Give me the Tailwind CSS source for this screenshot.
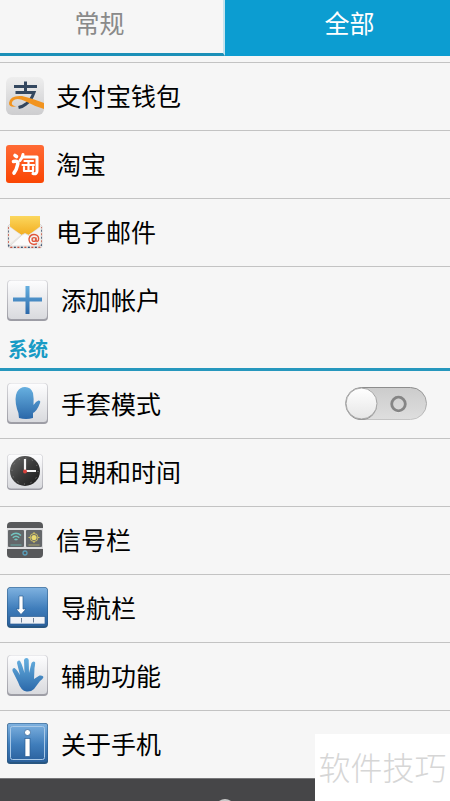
<!DOCTYPE html>
<html lang="zh-CN">
<head>
<meta charset="utf-8">
<meta name="viewport" content="width=device-width, initial-scale=1">
<title>设置</title>
<script src="https://cdn.jsdelivr.net/npm/@tailwindcss/browser@4"></script>
</head>
<body class="min-h-screen flex flex-col overflow-x-hidden bg-[#f6f6f6] text-black font-['Noto_Sans_CJK_SC',sans-serif]">

<svg class="absolute size-0" aria-hidden="true">
  <defs>
    <linearGradient id="tile" x1="0" y1="0" x2="0" y2="1"><stop offset="0" stop-color="#fdfdfe"/><stop offset="1" stop-color="#d9dade"/></linearGradient>
    <linearGradient id="silver" x1="0" y1="0" x2="0" y2="1"><stop offset="0" stop-color="#eeeeee"/><stop offset="1" stop-color="#cdcdcf"/></linearGradient>
    <linearGradient id="edge" x1="0" y1="0" x2="0" y2="1"><stop offset="0" stop-color="#d8d8dc"/><stop offset="1" stop-color="#9c9ca4"/></linearGradient>
    <linearGradient id="blueTile" x1="0" y1="0" x2="0" y2="1"><stop offset="0" stop-color="#7fb2e0"/><stop offset="0.55" stop-color="#3f7dbb"/><stop offset="1" stop-color="#2a609c"/></linearGradient>
    <linearGradient id="blueMark" x1="0" y1="0" x2="0" y2="1"><stop offset="0" stop-color="#67b0e0"/><stop offset="1" stop-color="#2b68a9"/></linearGradient>
    <linearGradient id="orange" x1="0" y1="0" x2="0" y2="1"><stop offset="0" stop-color="#ff6a35"/><stop offset="1" stop-color="#fa4603"/></linearGradient>
    <linearGradient id="yellow" x1="0" y1="0" x2="0" y2="1"><stop offset="0" stop-color="#fbd75e"/><stop offset="1" stop-color="#f3ae21"/></linearGradient>
    <linearGradient id="dial" x1="0" y1="0" x2="1" y2="1"><stop offset="0" stop-color="#6a6a6a"/><stop offset="0.5" stop-color="#3b3b3b"/><stop offset="1" stop-color="#191919"/></linearGradient>
    <linearGradient id="track" x1="0" y1="0" x2="0" y2="1"><stop offset="0" stop-color="#cccccc"/><stop offset="1" stop-color="#dedede"/></linearGradient>
    <linearGradient id="trackEdge" x1="0" y1="0" x2="0" y2="1"><stop offset="0" stop-color="#8d8d8d"/><stop offset="1" stop-color="#c4c4c4"/></linearGradient>
    <linearGradient id="knob" x1="0" y1="0" x2="0" y2="1"><stop offset="0" stop-color="#ffffff"/><stop offset="1" stop-color="#e6e6e6"/></linearGradient>
  </defs>
</svg>

<nav class="flex h-14 shrink-0 text-[25px] leading-11 text-center">
  <a href="#general" class="w-1/2 pr-6 border-r-2 border-[#c4e4ef] border-b-3 border-b-[#1b90b8] text-[#8a8a8a]">常规</a>
  <a href="#all" aria-current="page" class="w-1/2 pl-6 bg-[#0c9dd1] text-white">全部</a>
</nav>

<main class="pt-1.5">
  <ul class="border-t border-[#c3c3c3] text-[25px] leading-9">
    <li class="border-b border-[#c3c3c3]">
      <a href="#alipay" class="flex items-center h-[67px] gap-3 pl-1.5 pb-0.5">
        <svg class="size-[38px]" viewBox="0 0 38 38" aria-hidden="true">
          <rect width="38" height="38" rx="6" fill="url(#silver)"/>
          <path d="M8 9.500H31M19.500 4.500V15.500M9.500 15.500H28Q25 24 20 27Q17 29.500 12.500 30.500" fill="none" stroke="#33475f" stroke-width="3"/>
          <path d="M12 29Q3 31.500 3 26Q4 18 16 19Q25 21 38 26V32Q29 29.500 21 25Q13 21 9 22.500Q5 24.500 6 27.500Q8 30 12 29Z" fill="#f2941f"/>
        </svg>
        <span class="pb-0.5">支付宝钱包</span>
      </a>
    </li>
    <li class="border-b border-[#c3c3c3]">
      <a href="#taobao" class="flex items-center h-[67px] gap-3 pl-1.5 pb-0.5">
        <svg class="size-[38px]" viewBox="0 0 38 38" aria-hidden="true">
          <rect width="38" height="38" rx="3" fill="url(#orange)"/>
          <g fill="none" stroke="#fff" stroke-linecap="round" stroke-linejoin="round">
            <path d="M9 10.500L10.500 11.500M7.500 16.500Q13 15.500 11.500 20Q10.500 25 8 28" stroke-width="3.600"/>
            <path d="M17 9.500Q16.500 13 14 15.500M16.500 12H31V26Q31 29.500 27 28.500" stroke-width="3"/>
            <path d="M18.500 16H27M16.500 20H28M22.500 16V25M18 22V26H27V22" stroke-width="2.200"/>
          </g>
        </svg>
        <span class="pb-0.5">淘宝</span>
      </a>
    </li>
    <li class="border-b border-[#c3c3c3]">
      <a href="#email" class="flex items-center h-[67px] gap-3 pl-1.5 pb-0.5">
        <svg class="size-[38px]" viewBox="0 0 38 38" aria-hidden="true">
          <path d="M2 13L4 11H34L36 13V33Q36 35 34 35H4Q2 35 2 33Z" fill="#efedeb" stroke="#d0cdca" stroke-width="0.700"/>
          <path d="M2.700 14V32Q2.700 34.300 5 34.300H33Q35.300 34.300 35.300 32V14" fill="none" stroke="#c8513f" stroke-width="1.400" stroke-dasharray="2 5"/>
          <path d="M2.700 14V32Q2.700 34.300 5 34.300H33Q35.300 34.300 35.300 32V14" fill="none" stroke="#39506f" stroke-width="1.400" stroke-dasharray="2 5" stroke-dashoffset="-3.500"/>
          <path d="M4 3H34V15L22 22Q19 19 16 22L4 15Z" fill="url(#yellow)"/>
          <path d="M3 13V32L15 22ZM35 13V32L23 22Z" fill="#f5f3f1" stroke="#dcd9d5" stroke-width="0.500"/>
          <path d="M4 33L16 22Q19 19 22 22L34 33Z" fill="#fcfbfa" stroke="#d5d2ce" stroke-width="0.700"/>
          <circle cx="28" cy="26.500" r="1.900" fill="none" stroke="#e0573c" stroke-width="1.400"/>
          <path d="M30 24.500V27.500Q31 29 32.400 27.500Q33.500 23 29.500 21.700Q24 20.800 23 26Q23 31 28 31.500L31 30.800" fill="none" stroke="#e0573c" stroke-width="1.400"/>
        </svg>
        <span class="pb-0.5">电子邮件</span>
      </a>
    </li>
    <li>
      <a href="#add-account" class="flex items-center h-17 gap-3 pl-1.5 pb-0.5">
        <svg class="size-[43px]" viewBox="0 0 43 43" aria-hidden="true">
          <rect x="1" y="1" width="41" height="41" rx="4" fill="url(#edge)"/><rect x="2" y="1.500" width="39" height="38.500" rx="3.500" fill="url(#tile)"/>
          <path d="M19.500 7H23.500V18.500H36V22.500H23.500V35H19.500V22.500H7V18.500H19.500Z" fill="url(#blueMark)"/>
        </svg>
        <span class="pb-0.5">添加帐户</span>
      </a>
    </li>
  </ul>

  <h2 class="h-9 px-2 border-b-3 border-[#2697bd] text-[20px] leading-7 font-bold text-[#189bc5]">系统</h2>

  <ul class="text-[25px] leading-9">
    <li class="flex items-center h-17 gap-3 pl-1.5 pb-0.5 pr-[23px] border-b border-[#c3c3c3]">
      <svg class="size-[43px]" viewBox="0 0 43 43" aria-hidden="true">
        <rect x="1" y="1" width="41" height="41" rx="4" fill="url(#edge)"/><rect x="2" y="1.500" width="39" height="38.500" rx="3.500" fill="url(#tile)"/>
        <path d="M13 36Q13 31 11 27Q8 16 11 10Q14 5 19 5Q25 5 27 11Q28 17 27.500 23Q30 19 32.500 18.500Q35 18.500 34 21Q31 29 27 31V36Q20 38 13 36Z" fill="url(#blueMark)"/>
      </svg>
      <label for="glove" class="flex-1 pb-0.5">手套模式</label>
      <span class="relative flex w-[82px] h-[34px]">
        <svg class="w-full h-full" viewBox="0 0 82 34" aria-hidden="true">
          <rect x="0.500" y="0.500" width="81" height="32" rx="16" fill="url(#track)" stroke="url(#trackEdge)"/>
          <circle cx="53.500" cy="18" r="7" fill="none" stroke="#fff"/>
          <circle cx="53.500" cy="17" r="6.800" fill="none" stroke="#858585" stroke-width="2.800"/>
          <circle cx="16.500" cy="17.500" r="15.500" fill="#8f8f8f"/>
          <circle cx="16.500" cy="16.500" r="15.500" fill="url(#knob)" stroke="#a5a5a5"/>
        </svg>
        <input id="glove" type="checkbox" role="switch" class="absolute inset-0 w-full h-full opacity-0">
      </span>
    </li>
    <li class="border-b border-[#c3c3c3]">
      <a href="#datetime" class="flex items-center h-[67px] gap-3 pl-1.5 pb-0.5">
        <svg class="size-[38px]" viewBox="0 0 38 38" aria-hidden="true">
          <rect x="1" y="1" width="36" height="36" rx="4" fill="url(#edge)"/><rect x="1.700" y="1.500" width="34.600" height="34" rx="3.500" fill="url(#tile)"/>
          <circle cx="19" cy="18" r="15" fill="url(#dial)"/>
          <circle cx="19" cy="18" r="13" fill="none" stroke="#8a8a8a" stroke-width="1" stroke-dasharray="1 5.800"/>
          <path d="M19 6V18H30" fill="none" stroke="#f5f5f5" stroke-width="2.200"/>
          <circle cx="19" cy="18.500" r="2" fill="#d8413c"/>
        </svg>
        <span class="pb-0.5">日期和时间</span>
      </a>
    </li>
    <li class="border-b border-[#c3c3c3]">
      <a href="#signal-bar" class="flex items-center h-[67px] gap-3 pl-1.5 pb-0.5">
        <svg class="size-[38px]" viewBox="0 0 38 38" aria-hidden="true">
          <rect x="1" y="1" width="36" height="36" rx="4" fill="#58595b"/>
          <rect x="1" y="7" width="36" height="21" fill="#dcdcde"/>
          <rect x="2" y="9" width="16" height="17" rx="1" fill="#64676a"/><rect x="20" y="9" width="16" height="17" rx="1" fill="#64676a"/>
          <g fill="none" stroke="#73c5c0" stroke-width="1.500"><path d="M5 14.500Q10 10 15 14.500M6.800 16.800Q10 13.800 13.200 16.800M8.600 19Q10 17.500 11.400 19"/></g>
          <path d="M4.500 24H15.500" stroke="#66aaa5"/><path d="M22.500 24H33.500" stroke="#a7a36f"/>
          <circle cx="28" cy="16.500" r="2.600" fill="#e8d970"/>
          <circle cx="28" cy="16.500" r="4" fill="none" stroke="#c9bc66" stroke-width="1"/>
          <path d="M28 11V13M28 20V22M22.500 16.500H24.500M31.500 16.500H33.500" stroke="#d2c465"/>
          <circle cx="19" cy="32" r="2" fill="none" stroke="#5a9fba" stroke-width="1.300"/>
        </svg>
        <span class="pb-0.5">信号栏</span>
      </a>
    </li>
    <li class="border-b border-[#c3c3c3]">
      <a href="#nav-bar" class="flex items-center h-[67px] gap-3 pl-1.5 pb-0.5">
        <svg class="size-[43px]" viewBox="0 0 43 43" aria-hidden="true">
          <rect x="1" y="1" width="41" height="41" rx="4" fill="#285681"/><rect x="1.500" y="1.500" width="40" height="38.500" rx="3.500" fill="url(#blueTile)"/>
          <path d="M13 10H17V23H20L15 28.500L10 23H13Z" fill="#fff" stroke="#2d5f94" stroke-width="0.700"/>
          <rect x="4" y="30.500" width="35" height="7.500" fill="#f0f2f6" stroke="#2d5f94" stroke-width="0.700"/>
          <path d="M15.500 32V36.500M27.500 32V36.500" stroke="#6f7f95"/>
        </svg>
        <span class="pb-0.5">导航栏</span>
      </a>
    </li>
    <li class="border-b border-[#c3c3c3]">
      <a href="#accessibility" class="flex items-center h-[67px] gap-3 pl-1.5 pb-0.5">
        <svg class="size-[43px]" viewBox="0 0 43 43" aria-hidden="true">
          <rect x="1" y="1" width="41" height="41" rx="4" fill="url(#edge)"/><rect x="2" y="1.500" width="39" height="38.500" rx="3.500" fill="url(#tile)"/>
          <path d="M12 28L6.500 17Q6 14 8.500 14Q10 14.500 14 21L11 9Q11 6 13.500 6.500Q15 7 18.500 19L18 6Q18.500 4 20.500 4Q22.500 4 22.700 6L23 19L25.500 9Q27 6.500 29 8Q29.500 9 28.500 14L28 25L33.500 21.500Q37 21 37.500 23Q37 25 34 27L28 35Q25 38 20.500 37.500Q15 37 12 28Z" fill="url(#blueMark)"/>
        </svg>
        <span class="pb-0.5">辅助功能</span>
      </a>
    </li>
    <li class="border-b border-[#777779]">
      <a href="#about" class="flex items-center h-[67px] gap-3 pl-1.5 pb-0.5">
        <svg class="size-[43px]" viewBox="0 0 43 43" aria-hidden="true">
          <rect x="1" y="1" width="41" height="41" rx="3" fill="#285681"/><rect x="1.500" y="1.500" width="40" height="38.500" rx="3" fill="url(#blueTile)"/>
          <rect x="4.500" y="4.500" width="34" height="33" rx="2" fill="none" stroke="#a9c9e7"/>
          <circle cx="21.500" cy="10.500" r="3" fill="#fff" stroke="#2d5f94" stroke-width="0.700"/>
          <rect x="19" y="16.500" width="5" height="18" fill="#fff" stroke="#2d5f94" stroke-width="0.700"/>
        </svg>
        <span class="pb-0.5">关于手机</span>
      </a>
    </li>
  </ul>
</main>

<footer class="flex-1 flex justify-center items-end overflow-hidden bg-[#464648]">
  <svg class="w-4 h-[3px]" viewBox="0 0 16 3" aria-hidden="true"><path d="M2 3Q8 -1 14 3Z" fill="#c8c8c8"/></svg>
</footer>

<div class="absolute right-0 bottom-0 w-[135px] h-[67px] bg-white text-center text-[32px] leading-16 font-light text-[#d6d6d6]">软件技巧</div>
</body>
</html>
